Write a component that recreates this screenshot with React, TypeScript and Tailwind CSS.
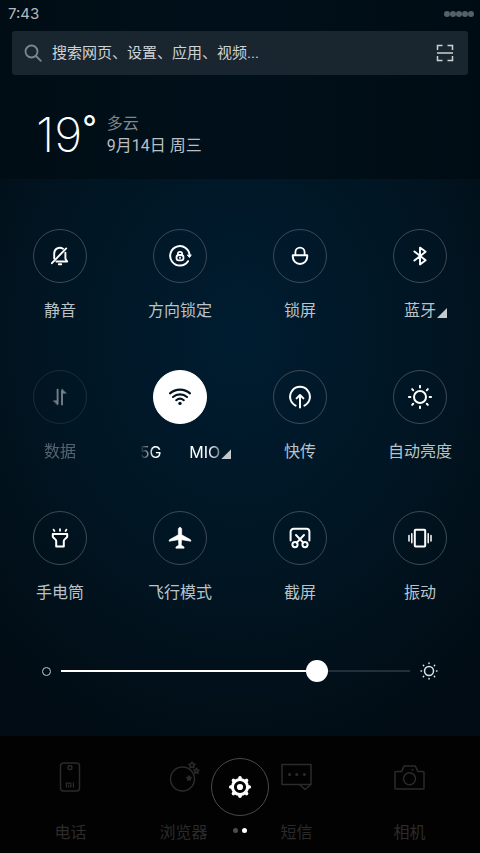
import { useState } from 'react';
import type { ReactNode } from 'react';

interface Toggle {
  id: string;
  label: string;
  icon: ReactNode;
  expandable?: boolean;
  disabled?: boolean;
}

const stroke = {
  fill: 'none',
  stroke: 'currentColor',
  strokeLinecap: 'round' as const,
  strokeLinejoin: 'round' as const,
};

const Icon = ({ children, width = 2 }: { children: ReactNode; width?: number }) => (
  <svg viewBox="0 0 24 24" className="size-6" {...stroke} strokeWidth={width} aria-hidden="true">
    {children}
  </svg>
);

const SUN_ANGLES = [0, 45, 90, 135, 180, 225, 270, 315];

const toggles: Toggle[] = [
  {
    id: 'mute',
    label: '静音',
    icon: (
      <Icon width={1.9}>
        <path d="M6.2 14.4V9.4A5.6 5.6 0 0 1 15 4.8" />
        <path d="M17.4 8.6v6.2l1.8 2.7H8.4" />
        <path d="M18.2 4.4 3.9 19.2" />
        <path d="M10.8 20.3h2.4" />
      </Icon>
    ),
  },
  {
    id: 'rotation',
    label: '方向锁定',
    icon: (
      <Icon>
        <path d="M20 17.2A9.7 9.7 0 1 1 21.6 12" />
        <path d="m19.4 11.4 2.1 2.2 1.6-2.4z" fill="currentColor" strokeWidth="0.8" />
        <rect x="8.5" y="11" width="7" height="5.4" rx="2.4" strokeWidth="1.8" />
        <path d="M9.8 10.8V10a2.2 2.2 0 0 1 4.4 0v.8M12 13.3v.8" strokeWidth="1.7" />
      </Icon>
    ),
  },
  {
    id: 'lock',
    label: '锁屏',
    icon: (
      <Icon>
        <path d="M7.4 11V8.2a4.6 4.6 0 0 1 9.2 0V11" strokeWidth="1.8" />
        <path d="M4.8 11.2h14.4v1.6a7.2 7.2 0 0 1-14.4 0z" strokeWidth="2" />
      </Icon>
    ),
  },
  {
    id: 'bluetooth',
    label: '蓝牙',
    expandable: true,
    icon: (
      <Icon width={1.9}>
        <path d="M6.4 7.4 17.6 16.2 12 20.4V3.6l5.6 4.2L6.4 16.6" />
      </Icon>
    ),
  },
  {
    id: 'data',
    label: '数据',
    disabled: true,
    icon: (
      <Icon width={1.9}>
        <path d="M9.6 4.6v14" />
        <path d="M5.6 15.8h4v4z" fill="currentColor" strokeWidth="0.6" />
        <path d="M14 5.6v14" />
        <path d="M14 4.2v4h4z" fill="currentColor" strokeWidth="0.6" />
      </Icon>
    ),
  },
  {
    id: 'wifi',
    label: '5G',
    expandable: true,
    icon: (
      <Icon width={2.1}>
        <path d="M2 8.4a15 15 0 0 1 20 0" />
        <path d="M5 12a10.6 10.6 0 0 1 14 0" />
        <path d="M8.2 15.2a6 6 0 0 1 7.6 0" />
        <circle cx="12" cy="18.4" r="1.7" fill="currentColor" stroke="none" />
      </Icon>
    ),
  },
  {
    id: 'midrop',
    label: '快传',
    icon: (
      <Icon>
        <path d="M7.6 20.6a9.9 9.9 0 1 1 8.8 0" />
        <path d="M12 22.4V10.6M8.6 13.4 12 10l3.4 3.4" />
      </Icon>
    ),
  },
  {
    id: 'brightness',
    label: '自动亮度',
    icon: (
      <Icon>
        <circle cx="12" cy="12" r="6" />
        {SUN_ANGLES.map((a) => (
          <path key={a} d="M12 .9v1.5" transform={`rotate(${a} 12 12)`} />
        ))}
      </Icon>
    ),
  },
  {
    id: 'torch',
    label: '手电筒',
    icon: (
      <Icon width={2}>
        <path d="M4.8 8h14.4v2.4c0 1.8-3.4 2.6-3.4 4.6v5.4H8.2V15c0-2-3.4-2.8-3.4-4.6z" />
        <path d="M12 3.2v1.6M5.6 3.6l.8 1.4M18.4 3.6l-.8 1.4" strokeWidth="1.8" />
      </Icon>
    ),
  },
  {
    id: 'airplane',
    label: '飞行模式',
    icon: (
      <Icon>
        <path
          d="M12 1.4c-1 0-1.7.9-1.7 2v5.4L1.7 13.6c-.4.2-.5.5-.5.9v.8l9.2-1.6.4 5.4-2.9 2v1.1h8.2v-1.1l-2.9-2 .4-5.4 9.2 1.6v-.8c0-.4-.1-.7-.5-.9l-8.6-4.8V3.4c0-1.1-.7-2-1.7-2z"
          fill="currentColor"
          strokeWidth="0.6"
        />
      </Icon>
    ),
  },
  {
    id: 'screenshot',
    label: '截屏',
    icon: (
      <Icon width={2}>
        <path d="M2.6 14.6V5.8a3 3 0 0 1 3-3h12.8a3 3 0 0 1 3 3v8.8" />
        <path d="m8 9 7.2 7.6M16 9l-7.2 7.6" />
        <circle cx="7" cy="18.6" r="2.6" />
        <circle cx="17" cy="18.6" r="2.6" />
      </Icon>
    ),
  },
  {
    id: 'vibrate',
    label: '振动',
    icon: (
      <Icon>
        <rect x="6.8" y="3.8" width="10.4" height="16.8" rx="0.8" />
        <path d="M3.8 7.8v9M20.2 7.8v9M1 9.6v5.4M23 9.6v5.4" strokeWidth="1.5" />
      </Icon>
    ),
  },
];

const dockApps = [
  {
    label: '电话',
    icon: (
      <>
        <rect x="6.5" y="3" width="19" height="28" rx="3" />
        <rect x="14.2" y="5.8" width="3.6" height="3.6" rx="0.8" />
        <path d="M12.4 27v-3.8h4.4V27M14.6 25.2V27M19.4 23v4" strokeWidth="1.3" />
      </>
    ),
  },
  {
    label: '浏览器',
    icon: (
      <>
        <circle cx="15.5" cy="19" r="12" />
        <path d="m25 2 1 1.8 2 .4-1.4 1.5.3 2.1-1.9-.9-1.9.9.3-2.1L22 4.2l2-.4zM29.4 8.4l.8 1.5 1.7.3-1.2 1.3.2 1.7-1.5-.8-1.6.8.3-1.7-1.2-1.3 1.7-.3z" />
        <path d="m22 15.8.7 1.4 1.5.3-1.1 1.1.2 1.5-1.3-.7-1.4.7.3-1.5-1.1-1.1 1.5-.3z" fill="currentColor" />
      </>
    ),
  },
  {
    label: '短信',
    icon: (
      <>
        <path d="M2 4.5h29v20H2zM19.5 24.5l5.500 5 6-5" />
        <path d="M9.5 14.5h.1M16.7 14.5h.1M24.3 14.5h.1" strokeWidth="3" />
      </>
    ),
  },
  {
    label: '相机',
    icon: (
      <>
        <path d="M3.5 11.5h5.3L11 6h11.4l2.4 5.5H30a1 1 0 0 1 1 1V28a1 1 0 0 1-1 1H3a1 1 0 0 1-1-1V12.5a1 1 0 0 1 1-1z" />
        <circle cx="16.5" cy="18.7" r="6" />
        <path d="M19.5 9.7h.1" strokeWidth="2" />
      </>
    ),
  },
];

function Corner() {
  return (
    <span
      aria-hidden="true"
      className="absolute bottom-1 left-full ml-px size-2.5 bg-[#c3c9cd] [clip-path:polygon(100%_0,100%_100%,0_100%)]"
    />
  );
}

function ToggleButton({ item, active, onToggle }: { item: Toggle; active: boolean; onToggle: () => void }) {
  return (
    <button
      type="button"
      aria-pressed={active}
      onClick={onToggle}
      className={`flex flex-col items-center gap-[17px] ${item.disabled ? 'opacity-45' : ''}`}
    >
      <span
        className={`flex size-[54px] items-center justify-center rounded-full border ${
          active ? 'border-white bg-white text-[#03131f]' : 'border-[#3d4a54] text-white'
        }`}
      >
        {item.icon}
      </span>
      {item.id === 'wifi' ? (
        <span className="relative text-base leading-[22px] text-white">
          <span className="flex gap-7 font-['Inter'] whitespace-nowrap [mask-image:linear-gradient(to_right,transparent,black_14px,black_68px,transparent_90px)]">
            <span>5G</span>
            <span>MIO</span>
          </span>
          <Corner />
        </span>
      ) : (
        <span className="relative text-base leading-[22px] text-[#bcc3c8]">
          {item.label}
          {item.expandable && <Corner />}
        </span>
      )}
    </button>
  );
}

export default function App() {
  const [active, setActive] = useState<string[]>(['wifi']);
  const [level, setLevel] = useState(75);

  const toggle = (id: string) =>
    setActive((ids) => (ids.includes(id) ? ids.filter((i) => i !== id) : [...ids, id]));

  return (
    <div className="flex min-h-screen flex-col bg-[#010c14] font-['Roboto','Noto_Sans_CJK_SC',sans-serif] text-white">
      <header className="bg-[linear-gradient(to_right,#000d15,#00101a_50%,#000c14)] pb-[18px]">
        <div className="flex h-[31px] items-center justify-between pr-1.5 pb-1 pl-2 text-[#b4babd]">
          <span className="font-['Inter'] text-[15px] leading-5">7:43</span>
          <div className="flex">
            {[1, 2, 3, 4, 5].map((n) => (
              <span key={n} className="size-1.5 rounded-full bg-[#56606a]" />
            ))}
          </div>
        </div>

        <div className="mx-3 flex h-11 items-center rounded-[3px] bg-[#1a262f] px-3">
          <svg viewBox="0 0 18 18" className="size-[18px] text-[#7d868c]" {...stroke} strokeWidth="1.8" aria-hidden="true">
            <circle cx="7.5" cy="7.5" r="6" />
            <path d="m12 12 4.8 4.8" />
          </svg>
          <input
            type="text"
            aria-label="搜索"
            placeholder="搜索网页、设置、应用、视频..."
            className="ml-2.5 min-w-0 flex-1 bg-transparent text-[15px] text-white outline-none placeholder:text-[#ced3d6]"
          />
          <button type="button" aria-label="扫一扫" className="mr-0.5 text-[#ccd1d4]">
            <svg viewBox="0 0 18 18" className="size-[18px]" fill="none" stroke="currentColor" strokeWidth="1.5" aria-hidden="true">
              <path d="M1.5 6V1.5h5M11.5 1.5h5V6M1.5 12v4.5h5M11.5 16.5h5V12M1 9h16" />
            </svg>
          </button>
        </div>

        <div className="mt-[34px] flex items-center gap-2.5 pl-9">
          <p className="flex items-start font-['Inter']">
            <span className="text-[48px] leading-[52px] font-extralight">19</span>
            <span className="text-[32px] leading-[38px]">°</span>
          </p>
          <div className="text-base leading-[22px]">
            <p className="text-[#7e878d]">多云</p>
            <p className="text-[#b9bfc3]">9月14日 周三</p>
          </div>
        </div>
      </header>

      <main className="flex-1 bg-[radial-gradient(ellipse_75%_80%_at_50%_28%,#001d31,#01131f_65%,#010c14)] pt-[50px] pb-[54px]">
        <div className="grid grid-cols-4 gap-y-12">
          {toggles.map((item) => (
            <ToggleButton
              key={item.id}
              item={item}
              active={active.includes(item.id)}
              onToggle={() => toggle(item.id)}
            />
          ))}
        </div>

        <div className="mt-14 flex items-center gap-2.5 px-[42px]">
          <span className="size-[9px] rounded-full border border-[#c5cacd]" />
          <input
            type="range"
            min={0}
            max={100}
            value={level}
            aria-label="亮度"
            onChange={(e) => setLevel(Number(e.target.value))}
            style={{ backgroundSize: `${level}% 2px, 100% 2px` }}
            className="h-[22px] min-w-0 flex-1 appearance-none bg-[linear-gradient(white,white),linear-gradient(#23303a,#23303a)] bg-left bg-no-repeat outline-none [&::-webkit-slider-thumb]:size-[22px] [&::-webkit-slider-thumb]:appearance-none [&::-webkit-slider-thumb]:rounded-full [&::-webkit-slider-thumb]:bg-white"
          />
          <svg viewBox="0 0 18 18" className="size-[18px] text-[#dfe3e5]" {...stroke} strokeWidth="1.5" aria-hidden="true">
            <circle cx="9" cy="9" r="4.5" />
            {SUN_ANGLES.map((a) => (
              <path key={a} d="M9 1v.5" transform={`rotate(${a} 9 9)`} />
            ))}
          </svg>
        </div>
      </main>

      <footer className="relative bg-[#020202] px-3.5 pt-6 pb-[9px]">
        <nav className="grid grid-cols-4">
          {dockApps.map((app) => (
            <button key={app.label} type="button" className="flex flex-col items-center gap-7 text-[#2b2b2b]">
              <svg viewBox="0 0 33 34" className="h-[34px] w-[33px]" {...stroke} strokeWidth="1.5" aria-hidden="true">
                {app.icon}
              </svg>
              <span className="text-base leading-[22px]">{app.label}</span>
            </button>
          ))}
        </nav>
        <div className="absolute inset-x-0 top-[22px] flex flex-col items-center gap-3">
          <button
            type="button"
            aria-label="设置"
            className="flex size-[58px] items-center justify-center rounded-full border border-[#4a4a4a] bg-[#020202] text-white"
          >
            <svg viewBox="0 0 24 24" className="size-6" {...stroke} aria-hidden="true">
              <circle cx="12" cy="12" r="7.6" strokeWidth="3" />
              {SUN_ANGLES.map((a) => (
                <path key={a} d="M12 4V2.700" strokeWidth="3.6" transform={`rotate(${a} 12 12)`} />
              ))}
              <circle cx="12" cy="12" r="3.1" fill="currentColor" stroke="none" />
            </svg>
          </button>
          <div className="flex gap-1">
            <span className="size-[5px] rounded-full bg-[#4d4d4d]" />
            <span className="size-[5px] rounded-full bg-white" />
          </div>
        </div>
      </footer>
    </div>
  );
}
